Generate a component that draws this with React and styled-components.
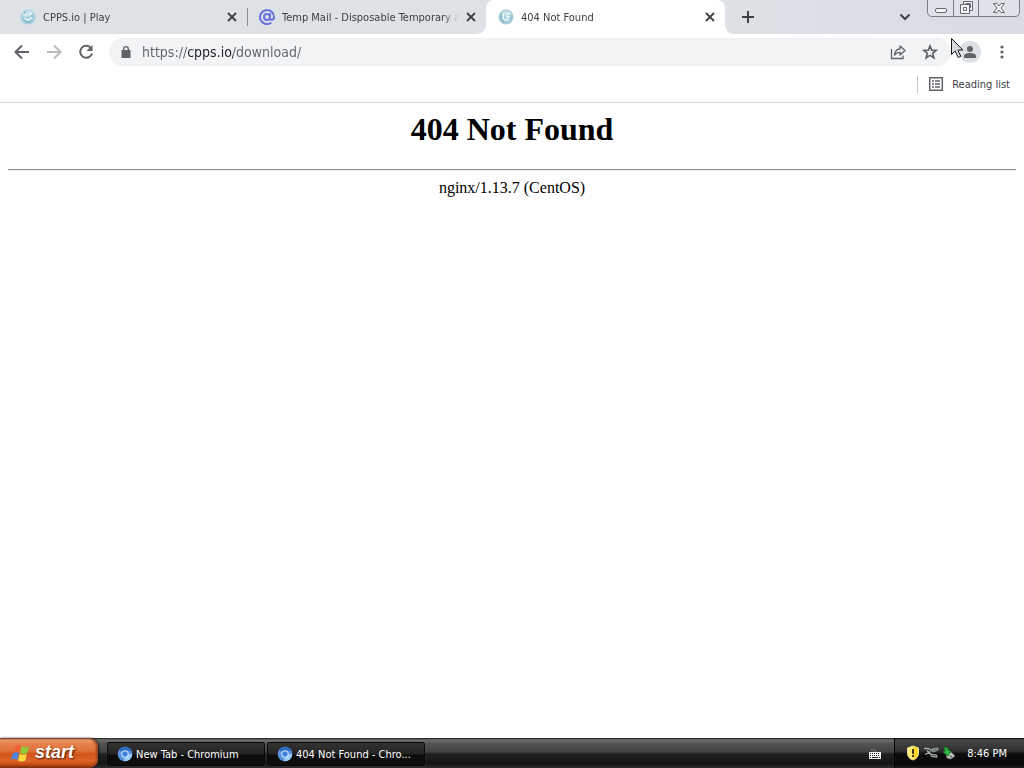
import React from 'react';
import styled, { createGlobalStyle } from 'styled-components';

const GlobalStyle = createGlobalStyle`
  * { box-sizing: border-box; }
  body { margin: 0; background: #fff; }
  button, input { font: inherit; color: inherit; }
  button { padding: 0; border: 0; background: none; cursor: default; }
  svg { display: block; flex: none; }
`;

const uiFont = "'DejaVu Sans Condensed', 'DejaVu Sans', sans-serif";

const Desktop = styled.div`
  min-height: 100vh;
  display: flex;
  flex-direction: column;
  font-family: ${uiFont};
  font-size: 11px;
  color: #3c4043;
`;

const TabStrip = styled.header`
  display: flex;
  height: 34px;
  padding: 0 4px 0 8px;
  background: linear-gradient(90deg, #dee1e6 70%, #d8dde3);
`;

const Tabs = styled.div`
  display: flex;
  min-width: 0;
`;

const Tab = styled.div`
  position: relative;
  flex: 0 1 239px;
  width: 239px;
  min-width: 0;
  display: flex;
  align-items: center;
  padding: 0 7px 0 12px;
  background: ${p => (p.$active ? '#fff' : 'transparent')};
  border-radius: 8px 8px 0 0;
  ${p => p.$divider && `
    &::after {
      content: '';
      position: absolute;
      right: -1px;
      top: 8px;
      width: 1px;
      height: 18px;
      background: #8b8f96;
    }
  `}
  ${p => p.$active && `
    &::before, &::after {
      content: '';
      position: absolute;
      bottom: 0;
      width: 8px;
      height: 8px;
    }
    &::before {
      left: -8px;
      background: radial-gradient(circle at 0 0, transparent 7px, #fff 8px);
    }
    &::after {
      right: -8px;
      background: radial-gradient(circle at 100% 0, transparent 7px, #fff 8px);
    }
  `}
`;

const TabTitle = styled.button`
  flex: 1;
  min-width: 0;
  display: flex;
  align-items: center;
  gap: 7px;
  height: 34px;
  text-align: left;
`;

const TabLabel = styled.span`
  flex: 1;
  overflow: hidden;
  margin-right: 4px;
  white-space: nowrap;
  line-height: 18px;
  padding-top: 2px;
  mask-image: linear-gradient(90deg, #000 calc(100% - 16px), transparent);
`;

const IconButton = styled.button`
  flex: none;
  display: flex;
  align-items: center;
  justify-content: center;
  width: ${p => p.$size || 32}px;
  height: ${p => p.$size || 32}px;
  border-radius: 50%;
  color: ${p => p.$color || '#5f6368'};
`;

const StripButton = styled(IconButton)`
  align-self: center;
  margin-left: ${p => (p.$end ? 'auto' : '7px')};
  margin-right: ${p => (p.$end ? '6px' : '0')};
  color: #3c4043;
`;

const WindowControls = styled.div`
  flex: none;
  display: flex;
  height: 17px;
  border: 1px solid #777b83;
  border-top: 0;
  border-radius: 0 0 5px 5px;
  background: #dfe3e9;
`;

const WindowButton = styled.button`
  display: flex;
  align-items: center;
  justify-content: center;
  width: ${p => (p.$wide ? 41 : 25)}px;
  color: #65686f;
  & + & { border-left: 1px solid #777b83; }
`;

const Toolbar = styled.nav`
  display: flex;
  align-items: center;
  height: 36px;
  padding: 0 6px;
`;

const Omnibox = styled.div`
  flex: 1;
  min-width: 0;
  display: flex;
  align-items: center;
  height: 28px;
  margin: 0 8px 0 7px;
  padding: 0 5px 0 10px;
  border-radius: 14px;
  background: #f1f3f4;
`;

const Address = styled.input`
  flex: 1;
  min-width: 0;
  height: 24px;
  margin-left: 9px;
  padding: 0;
  border: 0;
  outline: 0;
  font-family: ${uiFont};
  font-size: 14px;
  background: linear-gradient(90deg, #5f6368 46px, #202124 46px, #202124 91px, #5f6368 91px);
  background-clip: text;
  -webkit-text-fill-color: transparent;
`;

const Profile = styled.div`
  position: relative;
  display: flex;
  margin-right: 5px;
`;

const Avatar = styled(IconButton)`
  background: #dcdfe3;
`;

const Pointer = styled.svg`
  position: absolute;
  left: -8px;
  top: -3px;
`;

const BookmarkBar = styled.div`
  display: flex;
  align-items: center;
  justify-content: flex-end;
  height: 33px;
  padding: 0 14px 4px 0;
  border-bottom: 1px solid #d8dadd;
`;

const ReadingList = styled.button`
  display: flex;
  align-items: center;
  gap: 8px;
  height: 17px;
  padding-left: 10px;
  border-left: 1px solid #c6c9cd;
`;

const Page = styled.main`
  flex: 1;
  padding: 8px;
  background: #fff;
  color: #000;
  font-family: 'Liberation Serif', 'Times New Roman', serif;
  font-size: 16px;
  text-align: center;
`;

const Heading = styled.h1`
  margin: 0 0 21px;
  font-size: 32px;
  line-height: 37px;
`;

const Rule = styled.hr`
  height: 2px;
  margin: 0 0 8px;
  border: 0;
  border-top: 1px solid #8c8c8c;
  border-bottom: 1px solid #eee;
`;

const Server = styled.p`
  margin: 0;
  line-height: 18px;
`;

const Taskbar = styled.footer`
  display: flex;
  height: 30px;
  color: #fff;
  background: linear-gradient(#1c1c1c 0, #717171 2px, #555 5px, #414141 14px, #202020 16px, #151515 26px, #303030);
`;

const Start = styled.button`
  flex: none;
  display: flex;
  align-items: center;
  gap: 5px;
  width: 98px;
  padding: 0 0 1px 10px;
  border-radius: 0 9px 9px 0;
  background: linear-gradient(#6b3018 0, #e99a6d 2px, #e8834f 5px, #e07038 13px, #cf5519 16px, #e0642a 23px, #c04a12 27px, #6a2508);
  box-shadow: inset -2px 0 2px #9a4720, 1px 0 2px #161616;
  font-family: 'Liberation Sans', Arial, sans-serif;
  font-size: 18px;
  font-weight: 700;
  font-style: italic;
  text-shadow: 1px 1px 2px #4a1904;
`;

const Tasks = styled.div`
  flex: 1;
  min-width: 0;
  display: flex;
  gap: 2px;
  padding: 4px 8px 2px 9px;
`;

const Task = styled.button`
  flex: 0 1 158px;
  min-width: 0;
  display: flex;
  align-items: center;
  gap: 3px;
  padding: 0 10px 0 9px;
  border: 1px solid #080808;
  border-radius: 2px;
  background: linear-gradient(#333 0, #232323 11px, #0b0b0b 12px, #101010);
  box-shadow: 0 0 1px #777;
  text-align: left;
  white-space: nowrap;
`;

const TaskText = styled.span`
  overflow: hidden;
  text-overflow: ellipsis;
`;

const LanguageBar = styled.button`
  flex: none;
  display: flex;
  align-items: center;
  justify-content: center;
  width: 38px;
`;

const Tray = styled.div`
  flex: none;
  display: flex;
  align-items: center;
  gap: 2px;
  padding: 0 17px 0 10px;
  border-left: 1px solid #000;
  background: linear-gradient(#111 0, #484848 2px, #303030 13px, #0c0c0c 16px, #090909 27px, #222);
`;

const Clock = styled.time`
  margin-left: 8px;
`;

const Svg = ({ size = 16, children, ...rest }) => (
  <svg width={size} height={size} viewBox={`0 0 ${size} ${size}`} fill="none" stroke="currentColor" aria-hidden="true" {...rest}>
    {children}
  </svg>
);

const PenguinIcon = () => (
  <Svg stroke="none">
    <circle cx="8" cy="8" r="7.500" fill="#a9d2df" />
    <path d="M2 5C5 1 10 0 13 4L10 7 4 8z" fill="#c9e5ec" />
    <path d="M2 9c2 6 9 7 12 1-3 3-9 3-12-1z" fill="#88bccc" />
    <path d="M5 6l2-1M9 6l3-2M5 9c2 3 5 2 7-1" stroke="#f2fbfd" strokeWidth="1.300" />
    <path d="M4 4l2-1M12 6v2" stroke="#5c9eb6" />
  </Svg>
);

const GlobeIcon = () => (
  <Svg stroke="none">
    <circle cx="8" cy="8" r="7.500" fill="#a3cad8" />
    <path d="M2 6C4 1 11 0 14 6l-4-2-4 4z" fill="#c6e1e9" />
    <path d="M6 4c-2 3-1 7 2 7h3M9 10V6c0-2 3-2 3 0M9 8h3" stroke="#f0fafc" strokeWidth="1.300" />
    <path d="M4 4c-2 3-1 7 2 9" stroke="#75aebf" />
  </Svg>
);

const AtIcon = () => (
  <Svg stroke="#6770dc" strokeWidth="2" strokeLinecap="round">
    <circle cx="8" cy="8" r="3" />
    <path d="M11 5v4c0 2.800 4 2.200 4-1A7 7 0 1 0 11.700 14" />
  </Svg>
);

const CloseIcon = () => (
  <Svg size={10} strokeWidth="1.800"><path d="M1 1l8 8M9 1L1 9" /></Svg>
);

const ChromiumIcon = () => (
  <Svg stroke="none">
    <circle cx="8" cy="8" r="7.300" fill="#5594dc" />
    <path d="M8 8L2 4A7.300 7.300 0 0 1 14.600 5H8z" fill="#2c6cc0" />
    <path d="M8 8h7.200A7.300 7.300 0 0 1 7 15.200z" fill="#9bcdf7" />
    <circle cx="8" cy="8" r="3.700" fill="#d3e8fc" />
    <circle cx="8" cy="8" r="2.700" fill="#3b82dd" />
  </Svg>
);

const WindowsFlag = () => (
  <Svg size={20} stroke="none">
    <path d="M5 3q3-2 6 0L9.300 9.500q-3-2-6 0z" fill="#ef6234" />
    <path d="M11.700 3.300q3.500 2 7.300 0L17.300 10q-3.500 2-7.300 0z" fill="#8fcb39" />
    <path d="M3 10.300q3-2 6 0L7.300 17q-3-2-6.300 0z" fill="#4a86e3" />
    <path d="M9.700 10.800q3.500 2 7.300 0L15.300 17.500q-3.500 2-7.300 0z" fill="#ffd83c" />
  </Svg>
);

const tabs = [
  { title: 'CPPS.io | Play', icon: <PenguinIcon />, divider: true },
  { title: 'Temp Mail - Disposable Temporary a', icon: <AtIcon /> },
  { title: '404 Not Found', icon: <GlobeIcon />, active: true },
];

const tasks = ['New Tab - Chromium', '404 Not Found - Chro...'];

export default function App() {
  return (
    <Desktop>
      <GlobalStyle />
      <TabStrip>
        <Tabs>
          {tabs.map(t => (
            <Tab key={t.title} $active={t.active} $divider={t.divider}>
              <TabTitle>
                {t.icon}
                <TabLabel>{t.title}</TabLabel>
              </TabTitle>
              <IconButton $size={16} $color="#3c4043" aria-label="Close tab"><CloseIcon /></IconButton>
            </Tab>
          ))}
        </Tabs>
        <StripButton aria-label="New tab">
          <Svg strokeWidth="2"><path d="M8 2v12M2 8h12" /></Svg>
        </StripButton>
        <StripButton $end aria-label="Search tabs">
          <Svg strokeWidth="2"><path d="M3.500 5.500L8 10l4.500-4.500" /></Svg>
        </StripButton>
        <WindowControls>
          <WindowButton aria-label="Minimize">
            <Svg><rect x="2.500" y="8.500" width="11" height="4" rx="1.500" fill="#f4f6f8" /></Svg>
          </WindowButton>
          <WindowButton aria-label="Restore">
            <Svg>
              <path d="M5.500 1.500h9v9h-9z" fill="#f4f6f8" />
              <path d="M2.500 4.500h9v9h-9z" fill="#f4f6f8" />
              <path d="M5.500 7.500h3v3h-3zM8 4V3.500h4.500V8" />
            </Svg>
          </WindowButton>
          <WindowButton $wide aria-label="Close">
            <Svg>
              <path d="M2.500 3.500h3.500L8 6l2-2.500h3.500L10 8l3.500 4.500H10L8 10l-2 2.500H2.500L6 8z" fill="#f4f6f8" />
            </Svg>
          </WindowButton>
        </WindowControls>
      </TabStrip>

      <Toolbar>
        <IconButton aria-label="Back">
          <Svg strokeWidth="2"><path d="M15 8H2M8 1.500L1.500 8 8 14.500" /></Svg>
        </IconButton>
        <IconButton $color="#b7babd" aria-label="Forward">
          <Svg strokeWidth="2"><path d="M1 8h13M8 1.500l6.500 6.500L8 14.500" /></Svg>
        </IconButton>
        <IconButton aria-label="Reload">
          <Svg strokeWidth="2"><path d="M12.500 3.500A6 6 0 1 0 14 9.500" /><path d="M14.500 1v6h-6z" fill="currentColor" stroke="none" /></Svg>
        </IconButton>
        <Omnibox>
          <Svg size={14} stroke="none">
            <path d="M4 5V4a3 3 0 0 1 6 0v1h1.500v8h-9V5zm1.300 0h3.400V4a1.700 1.700 0 0 0-3.400 0z" fill="#5f6368" />
          </Svg>
          <Address aria-label="Address" defaultValue="https://cpps.io/download/" />
          <IconButton aria-label="Share">
            <Svg strokeWidth="1.300">
              <path d="M1.500 5v9.500h11.500V11.500" />
              <path d="M4.500 11c.5-4 2-6 5.500-6V2l5 4.500-5 4.500V8.300c-2.500 0-4 .7-5.500 2.700z" strokeLinejoin="round" />
            </Svg>
          </IconButton>
          <IconButton aria-label="Bookmark this page">
            <Svg strokeWidth="1.700">
              <path d="M8 2l1.700 4.200 4.500.3-3.500 2.900 1.200 4.400L8 11.400l-3.900 2.400 1.200-4.400-3.500-2.900 4.500-.3z" />
            </Svg>
          </IconButton>
        </Omnibox>
        <Profile>
          <Avatar $size={22} aria-label="Profile">
            <Svg size={14} stroke="none"><circle cx="7" cy="4" r="3" fill="currentColor" /><path d="M1 13v-2c0-4 12-4 12 0v2z" fill="currentColor" /></Svg>
          </Avatar>
          <Pointer width="13" height="21" viewBox="0 0 13 21" aria-hidden="true">
            <path d="M.5.500v16l3.700-3.600 3 6.600 2.600-1.200-3-6.300h5z" fill="#d9dcdf" stroke="#161616" />
          </Pointer>
        </Profile>
        <IconButton aria-label="Menu">
          <Svg stroke="none"><circle cx="8" cy="3" r="1.600" fill="currentColor" /><circle cx="8" cy="8" r="1.600" fill="currentColor" /><circle cx="8" cy="13" r="1.600" fill="currentColor" /></Svg>
        </IconButton>
      </Toolbar>

      <BookmarkBar>
        <ReadingList>
          <Svg stroke="#5f6368" strokeWidth="1.500">
            <path d="M1.700 1.700h12.600v12.600H1.700zM4 5h2M7 5h5M4 8h2M7 8h5M4 11h2M7 11h5" />
          </Svg>
          Reading list
        </ReadingList>
      </BookmarkBar>

      <Page>
        <Heading>404 Not Found</Heading>
        <Rule />
        <Server>nginx/1.13.7 (CentOS)</Server>
      </Page>

      <Taskbar>
        <Start><WindowsFlag />start</Start>
        <Tasks>
          {tasks.map(t => (
            <Task key={t}><ChromiumIcon /><TaskText>{t}</TaskText></Task>
          ))}
        </Tasks>
        <LanguageBar aria-label="Keyboard">
          <Svg stroke="none">
            <path d="M2 7h12v7H2z" fill="#f4f4f4" />
            <path d="M3 8.500h10M3 10.500h10" stroke="#252525" strokeDasharray="1 1" />
            <path d="M3 12.500h1M5 12.500h6M12 12.500h1" stroke="#252525" />
            <path d="M8.500 7V5h-4V3" stroke="#999" strokeDasharray="1 1" />
          </Svg>
        </LanguageBar>
        <Tray>
          <Svg stroke="none">
            <path d="M8 1l5.500 2v5c0 4-2.500 6-5.500 7-3-1-5.500-3-5.500-7V3z" fill="#ffd928" stroke="#e6dca0" />
            <path d="M8 1.500V14.500c-3-1-5-3-5-6.500V3.300z" fill="#ffec7c" />
            <path d="M7 4h2v5H7zM7 10h2v2H7z" fill="#43390d" />
          </Svg>
          <Svg>
            <path d="M1 3.500h4l4 2M2 9.500l6-3M4 5.500l5 5" stroke="#a7b0ac" strokeWidth="1.300" />
            <path d="M9 4l6-1v2l-5 2zM8 9l6 1v2.500l-6-1z" fill="#68766e" stroke="#a5aca8" strokeWidth=".8" />
          </Svg>
          <Svg stroke="none">
            <path d="M5 9l5-2 4 4-4 3-4-1z" fill="#c2c9c3" stroke="#68736a" />
            <path d="M3 2l4 1v2l3 1-3 5-5-4 2-1z" fill="#33b943" stroke="#176d25" strokeWidth=".8" />
            <path d="M9 11l2 1" stroke="#5f6c62" strokeWidth="1.500" />
          </Svg>
          <Clock>8:46 PM</Clock>
        </Tray>
      </Taskbar>
    </Desktop>
  );
}
